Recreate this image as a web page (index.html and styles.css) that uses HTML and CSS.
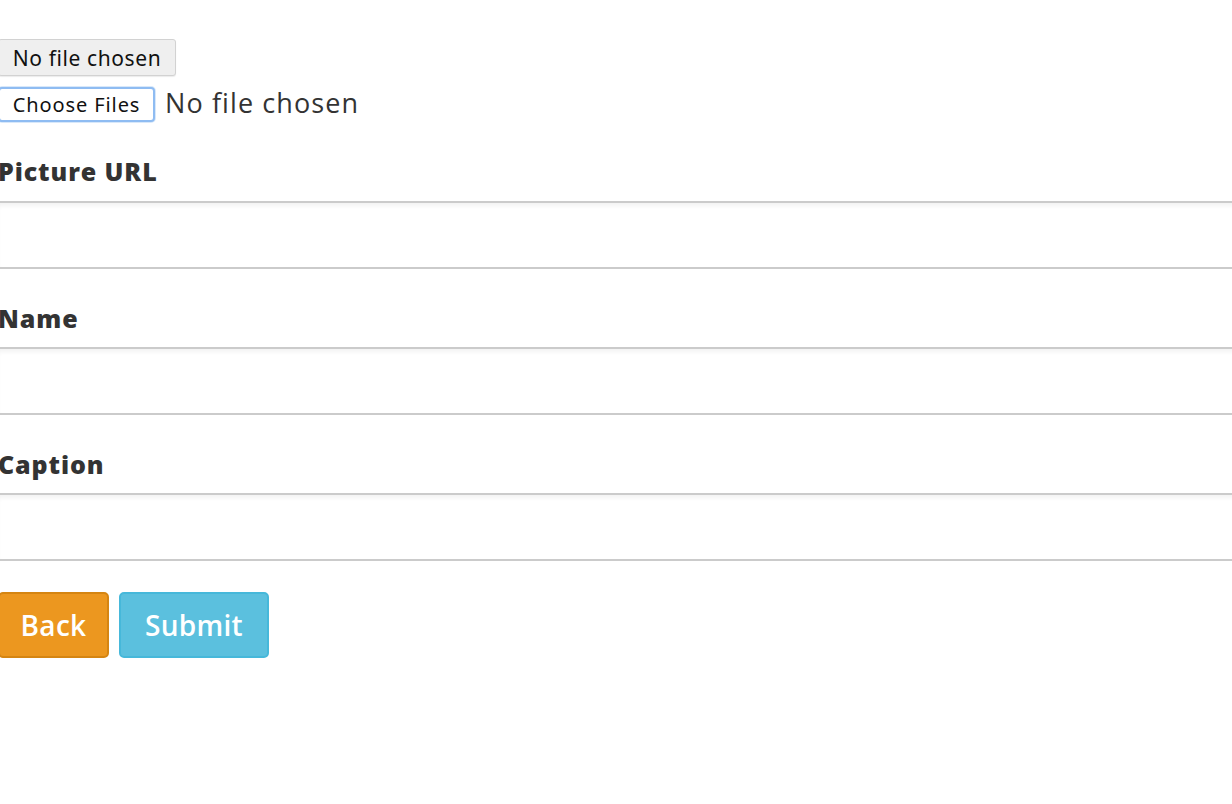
FILE: index.html
```html
<!DOCTYPE html>
<html>
<head>
<meta charset="utf-8">
<link rel="stylesheet" href="styles.css">
</head>
<body>
<form class="form">
  <div class="top-row">
    <button type="button" class="sys-btn">No file chosen</button>
  </div>
  <div class="file-row">
    <button type="button" class="choose-btn">Choose Files</button>
    <span class="file-status">No file chosen</span>
  </div>
  <div class="field">
    <label class="label">Picture URL</label>
    <div class="input"></div>
  </div>
  <div class="field">
    <label class="label">Name</label>
    <div class="input"></div>
  </div>
  <div class="field">
    <label class="label">Caption</label>
    <div class="input"></div>
  </div>
  <div class="actions">
    <button type="button" class="btn btn-back">Back</button>
    <button type="button" class="btn btn-submit">Submit</button>
  </div>
</form>
</body>
</html>
```
FILE: styles.css
```css
html, body {
  margin: 0;
  padding: 0;
  background: #fff;
}
body {
  font-family: "Open Sans", "Noto Sans", sans-serif;
  color: #333;
}
.form {
  margin-left: -2px;
  padding-top: 39px;
}
.top-row {
  display: flex;
}
.sys-btn {
  font-family: "Noto Sans", sans-serif;
  font-size: 21px;
  letter-spacing: 0.6px;
  height: 37px;
  width: 178px;
  padding: 0;
  background: #efefef;
  border: 1px solid #d2d2d2;
  border-radius: 3px;
  color: #111;
  box-shadow: 0 1px 1px rgba(0,0,0,0.08);
}
.file-row {
  display: flex;
  align-items: center;
  margin-top: 11px;
  height: 35px;
}
.choose-btn {
  font-family: "Noto Sans", sans-serif;
  font-size: 20px;
  letter-spacing: 0.9px;
  height: 35px;
  width: 157px;
  padding: 0;
  background: #fff;
  border: 2px solid #8fbcf2;
  border-radius: 4px;
  color: #111;
  box-shadow: 0 0 0 1px rgba(143, 188, 242, 0.35);
}
.file-status {
  margin-left: 10px;
  font-size: 27px;
  color: #333;
  letter-spacing: 1.1px;
  margin-top: -5px;
}
.field {
  display: flex;
  flex-direction: column;
  margin-top: 33px;
}
.field + .field {
  margin-top: 33px;
}
.label {
  font-weight: 800;
  font-size: 25px;
  line-height: 33px;
  color: #333;
  letter-spacing: 0.9px;
}
.input {
  margin-top: 13px;
  height: 64px;
  border-top: 2px solid #cbcbcb;
  border-bottom: 2px solid #cbcbcb;
  box-shadow: inset 0 3px 4px rgba(0,0,0,0.05);
  margin-right: -10px;
}
.field + .field .input {
  margin-top: 12px;
}
.actions {
  display: flex;
  gap: 10px;
  margin-top: 31px;
}
.btn {
  font-family: "Open Sans", sans-serif;
  font-size: 28px;
  font-weight: 600;
  letter-spacing: 0.3px;
  color: #fff;
  height: 66px;
  border-radius: 5px;
  padding: 0;
}
.btn-back {
  width: 111px;
  background: #ec971f;
  border: 2px solid #d58512;
}
.btn-submit {
  width: 150px;
  background: #5bc0de;
  border: 2px solid #46b8da;
}
```
